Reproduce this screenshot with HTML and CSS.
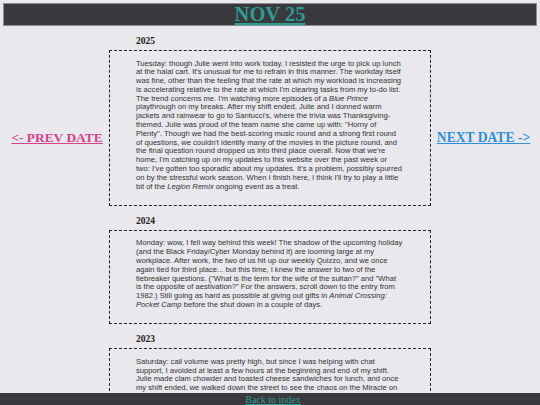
FILE: index.html
```html
<!DOCTYPE html>
<html lang="en">
<head>
<meta charset="utf-8">
<title>Nov 25</title>
<link rel="stylesheet" href="styles.css">
</head>
<body>
<header class="day-header">
  <h1 class="day-title"><a href="#">NOV 25</a></h1>
</header>

<div class="layout">
  <nav class="side side-prev"><a class="date-link prev" href="#">&lt;- PREV DATE</a></nav>

  <main class="entries">
    <section class="entry">
      <h2 class="year">2025</h2>
      <div class="entry-box">
        <p>Tuesday: though Julie went into work today, I resisted the urge to pick up lunch at the halal cart. It's unusual for me to refrain in this manner. The workday itself was fine, other than the feeling that the rate at which my workload is increasing is accelerating relative to the rate at which I'm clearing tasks from my to-do list. The trend concerns me. I'm watching more episodes of a <i>Blue Prince</i> playthrough on my breaks. After my shift ended, Julie and I donned warm jackets and rainwear to go to Santucci's, where the trivia was Thanksgiving-themed. Julie was proud of the team name she came up with: "Horny of Plenty". Though we had the best-scoring music round and a strong first round of questions, we couldn't identify many of the movies in the picture round, and the final question round dropped us into third place overall. Now that we're home, I'm catching up on my updates to this website over the past week or two: I've gotten too sporadic about my updates. It's a problem, possibly spurred on by the stressful work season. When I finish here, I think I'll try to play a little bit of the <i>Legion Remix</i> ongoing event as a treat.</p>
      </div>
    </section>

    <section class="entry">
      <h2 class="year">2024</h2>
      <div class="entry-box">
        <p>Monday: wow, I fell way behind this week! The shadow of the upcoming holiday (and the Black Friday/Cyber Monday behind it) are looming large at my workplace. After work, the two of us hit up our weekly Quizzo, and we once again tied for third place... but this time, I knew the answer to two of the tiebreaker questions. ("What is the term for the wife of the sultan?" and "What is the opposite of aestivation?" For the answers, scroll down to the entry from 1982.) Still going as hard as possible at giving out gifts in <i>Animal Crossing: Pocket Camp</i> before the shut down in a couple of days.</p>
      </div>
    </section>

    <section class="entry">
      <h2 class="year">2023</h2>
      <div class="entry-box">
        <p>Saturday: call volume was pretty high, but since I was helping with chat support, I avoided at least a few hours at the beginning and end of my shift. Julie made clam chowder and toasted cheese sandwiches for lunch, and once my shift ended, we walked down the street to see the chaos on the Miracle on 13th Street block, which was packed with people taking pictures of the lights.</p>
      </div>
    </section>
  </main>

  <nav class="side side-next"><a class="date-link next" href="#">NEXT DATE -&gt;</a></nav>
</div>

<footer class="page-footer">
  <a href="#">Back to index</a>
</footer>
</body>
</html>
```

FILE: styles.css
```css
html, body {
  margin: 0;
  padding: 0;
}

body {
  background: #e9e8ed;
  color: #333;
  font-family: "Liberation Serif", "Times New Roman", serif;
}

/* top title bar */
.day-header {
  margin: 3px 3px 0;
  height: 21px;
  background: #3a393e;
  border: 1px solid #8d8c92;
  text-align: center;
}

.day-title {
  margin: 0;
  font-size: 20.5px;
  line-height: 21px;
  font-weight: bold;
}

.day-title a {
  color: #2f9c91;
}

/* three columns: prev link, entries, next link */
.layout {
  display: grid;
  grid-template-columns: 1fr 322px 1fr;
  padding-bottom: 40px;
}

.side {
  padding-top: 102px;
  text-align: center;
}

.side-prev {
  padding-left: 5px;
}

.side-next {
  padding-right: 4px;
}

.date-link {
  font-size: 13.4px;
  font-weight: bold;
  line-height: 15px;
}

.date-link.prev {
  color: #d3428a;
}

.date-link.next {
  font-size: 13.6px;
  color: #2e8fd6;
}

.entries {
  display: flex;
  flex-direction: column;
  gap: 10px;
  padding-top: 10px;
}

.year {
  margin: 0 0 3px 27px;
  font-size: 9.5px;
  line-height: 11px;
  font-weight: bold;
  color: #222;
}

.entry-box {
  border: 1px dashed #222;
  padding: 8.5px 27.6px 13.5px 26px;
}

.entry-box p {
  margin: 0;
  font-family: "Liberation Sans", Arial, sans-serif;
  font-size: 7.6px;
  line-height: 8.8px;
  color: #333;
}

/* bottom bar pinned over the page */
.page-footer {
  position: fixed;
  left: 0;
  right: 0;
  bottom: 0;
  height: 12px;
  background: #3a393e;
  text-align: center;
  padding-left: 6px;
  font-size: 10px;
  line-height: 14px;
}

.page-footer a {
  color: #2f9c91;
}
```
